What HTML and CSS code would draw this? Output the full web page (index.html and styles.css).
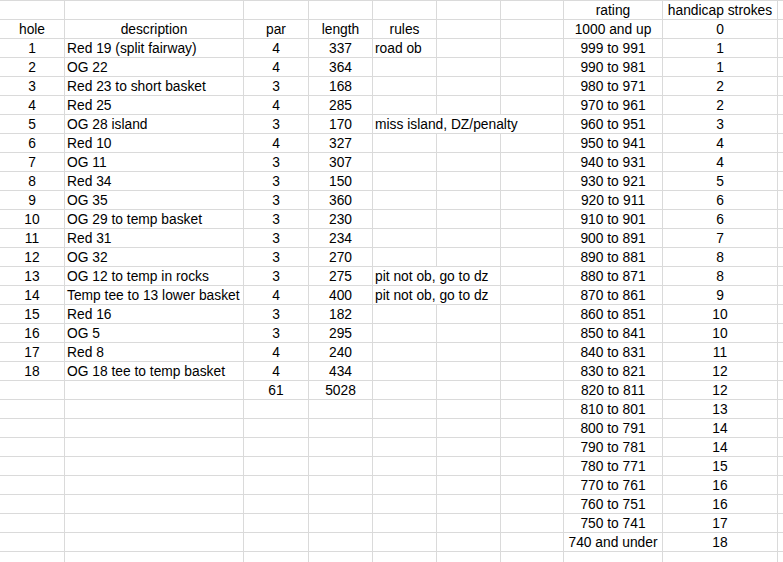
FILE: index.html
```html
<!DOCTYPE html>
<html>
<head>
<meta charset="utf-8">
<link rel="stylesheet" href="styles.css">
</head>
<body>
<div class="sheet">
  <div class="row"><div class="c"></div><div class="c"></div><div class="c"></div><div class="c"></div><div class="c"></div><div class="c"></div><div class="c"></div><div class="c ctr">rating</div><div class="c ctr">handicap strokes</div><div class="c"></div></div>
  <div class="row"><div class="c ctr">hole</div><div class="c ctr">description</div><div class="c ctr">par</div><div class="c ctr">length</div><div class="c ctr">rules</div><div class="c"></div><div class="c"></div><div class="c ctr">1000 and up</div><div class="c ctr">0</div><div class="c"></div></div>
  <div class="row"><div class="c ctr">1</div><div class="c">Red 19 (split fairway)</div><div class="c ctr">4</div><div class="c ctr">337</div><div class="c">road ob</div><div class="c"></div><div class="c"></div><div class="c ctr">999 to 991</div><div class="c ctr">1</div><div class="c"></div></div>
  <div class="row"><div class="c ctr">2</div><div class="c">OG 22</div><div class="c ctr">4</div><div class="c ctr">364</div><div class="c"></div><div class="c"></div><div class="c"></div><div class="c ctr">990 to 981</div><div class="c ctr">1</div><div class="c"></div></div>
  <div class="row"><div class="c ctr">3</div><div class="c">Red 23 to short basket</div><div class="c ctr">3</div><div class="c ctr">168</div><div class="c"></div><div class="c"></div><div class="c"></div><div class="c ctr">980 to 971</div><div class="c ctr">2</div><div class="c"></div></div>
  <div class="row"><div class="c ctr">4</div><div class="c">Red 25</div><div class="c ctr">4</div><div class="c ctr">285</div><div class="c"></div><div class="c"></div><div class="c"></div><div class="c ctr">970 to 961</div><div class="c ctr">2</div><div class="c"></div></div>
  <div class="row"><div class="c ctr">5</div><div class="c">OG 28 island</div><div class="c ctr">3</div><div class="c ctr">170</div><div class="c s3">miss island, DZ/penalty</div><div class="c ctr">960 to 951</div><div class="c ctr">3</div><div class="c"></div></div>
  <div class="row"><div class="c ctr">6</div><div class="c">Red 10</div><div class="c ctr">4</div><div class="c ctr">327</div><div class="c"></div><div class="c"></div><div class="c"></div><div class="c ctr">950 to 941</div><div class="c ctr">4</div><div class="c"></div></div>
  <div class="row"><div class="c ctr">7</div><div class="c">OG 11</div><div class="c ctr">3</div><div class="c ctr">307</div><div class="c"></div><div class="c"></div><div class="c"></div><div class="c ctr">940 to 931</div><div class="c ctr">4</div><div class="c"></div></div>
  <div class="row"><div class="c ctr">8</div><div class="c">Red 34</div><div class="c ctr">3</div><div class="c ctr">150</div><div class="c"></div><div class="c"></div><div class="c"></div><div class="c ctr">930 to 921</div><div class="c ctr">5</div><div class="c"></div></div>
  <div class="row"><div class="c ctr">9</div><div class="c">OG 35</div><div class="c ctr">3</div><div class="c ctr">360</div><div class="c"></div><div class="c"></div><div class="c"></div><div class="c ctr">920 to 911</div><div class="c ctr">6</div><div class="c"></div></div>
  <div class="row"><div class="c ctr">10</div><div class="c">OG 29 to temp basket</div><div class="c ctr">3</div><div class="c ctr">230</div><div class="c"></div><div class="c"></div><div class="c"></div><div class="c ctr">910 to 901</div><div class="c ctr">6</div><div class="c"></div></div>
  <div class="row"><div class="c ctr">11</div><div class="c">Red 31</div><div class="c ctr">3</div><div class="c ctr">234</div><div class="c"></div><div class="c"></div><div class="c"></div><div class="c ctr">900 to 891</div><div class="c ctr">7</div><div class="c"></div></div>
  <div class="row"><div class="c ctr">12</div><div class="c">OG 32</div><div class="c ctr">3</div><div class="c ctr">270</div><div class="c"></div><div class="c"></div><div class="c"></div><div class="c ctr">890 to 881</div><div class="c ctr">8</div><div class="c"></div></div>
  <div class="row"><div class="c ctr">13</div><div class="c">OG 12 to temp in rocks</div><div class="c ctr">3</div><div class="c ctr">275</div><div class="c s2">pit not ob, go to dz</div><div class="c"></div><div class="c ctr">880 to 871</div><div class="c ctr">8</div><div class="c"></div></div>
  <div class="row"><div class="c ctr">14</div><div class="c">Temp tee to 13 lower basket</div><div class="c ctr">4</div><div class="c ctr">400</div><div class="c s2">pit not ob, go to dz</div><div class="c"></div><div class="c ctr">870 to 861</div><div class="c ctr">9</div><div class="c"></div></div>
  <div class="row"><div class="c ctr">15</div><div class="c">Red 16</div><div class="c ctr">3</div><div class="c ctr">182</div><div class="c"></div><div class="c"></div><div class="c"></div><div class="c ctr">860 to 851</div><div class="c ctr">10</div><div class="c"></div></div>
  <div class="row"><div class="c ctr">16</div><div class="c">OG 5</div><div class="c ctr">3</div><div class="c ctr">295</div><div class="c"></div><div class="c"></div><div class="c"></div><div class="c ctr">850 to 841</div><div class="c ctr">10</div><div class="c"></div></div>
  <div class="row"><div class="c ctr">17</div><div class="c">Red 8</div><div class="c ctr">4</div><div class="c ctr">240</div><div class="c"></div><div class="c"></div><div class="c"></div><div class="c ctr">840 to 831</div><div class="c ctr">11</div><div class="c"></div></div>
  <div class="row"><div class="c ctr">18</div><div class="c">OG 18 tee to temp basket</div><div class="c ctr">4</div><div class="c ctr">434</div><div class="c"></div><div class="c"></div><div class="c"></div><div class="c ctr">830 to 821</div><div class="c ctr">12</div><div class="c"></div></div>
  <div class="row"><div class="c"></div><div class="c"></div><div class="c ctr">61</div><div class="c ctr">5028</div><div class="c"></div><div class="c"></div><div class="c"></div><div class="c ctr">820 to 811</div><div class="c ctr">12</div><div class="c"></div></div>
  <div class="row"><div class="c"></div><div class="c"></div><div class="c"></div><div class="c"></div><div class="c"></div><div class="c"></div><div class="c"></div><div class="c ctr">810 to 801</div><div class="c ctr">13</div><div class="c"></div></div>
  <div class="row"><div class="c"></div><div class="c"></div><div class="c"></div><div class="c"></div><div class="c"></div><div class="c"></div><div class="c"></div><div class="c ctr">800 to 791</div><div class="c ctr">14</div><div class="c"></div></div>
  <div class="row"><div class="c"></div><div class="c"></div><div class="c"></div><div class="c"></div><div class="c"></div><div class="c"></div><div class="c"></div><div class="c ctr">790 to 781</div><div class="c ctr">14</div><div class="c"></div></div>
  <div class="row"><div class="c"></div><div class="c"></div><div class="c"></div><div class="c"></div><div class="c"></div><div class="c"></div><div class="c"></div><div class="c ctr">780 to 771</div><div class="c ctr">15</div><div class="c"></div></div>
  <div class="row"><div class="c"></div><div class="c"></div><div class="c"></div><div class="c"></div><div class="c"></div><div class="c"></div><div class="c"></div><div class="c ctr">770 to 761</div><div class="c ctr">16</div><div class="c"></div></div>
  <div class="row"><div class="c"></div><div class="c"></div><div class="c"></div><div class="c"></div><div class="c"></div><div class="c"></div><div class="c"></div><div class="c ctr">760 to 751</div><div class="c ctr">16</div><div class="c"></div></div>
  <div class="row"><div class="c"></div><div class="c"></div><div class="c"></div><div class="c"></div><div class="c"></div><div class="c"></div><div class="c"></div><div class="c ctr">750 to 741</div><div class="c ctr">17</div><div class="c"></div></div>
  <div class="row"><div class="c"></div><div class="c"></div><div class="c"></div><div class="c"></div><div class="c"></div><div class="c"></div><div class="c"></div><div class="c ctr">740 and under</div><div class="c ctr">18</div><div class="c"></div></div>
  <div class="row"><div class="c"></div><div class="c"></div><div class="c"></div><div class="c"></div><div class="c"></div><div class="c"></div><div class="c"></div><div class="c"></div><div class="c"></div><div class="c"></div></div>
</div>
</body>
</html>
```

FILE: styles.css
```css
html, body {
  margin: 0;
  padding: 0;
  background: #ffffff;
  overflow: hidden;
}

body {
  font-family: "Liberation Sans", Arial, sans-serif;
  font-size: 13.8px;
  color: #000000;
}

.sheet {
  width: 100%;
  border-top: 1px solid #dadada;
}

.row {
  display: grid;
  grid-template-columns: 65px 179px 65px 64px 64px 64px 63px 99px 115px minmax(0, 1fr);
  height: 19px;
}

.c {
  border-right: 1px solid #dadada;
  border-bottom: 1px solid #dadada;
  line-height: 16px;
  padding: 2px 2px 0;
  white-space: nowrap;
  overflow: visible;
}

.row > .c:last-child {
  border-right: none;
  padding: 0;
}

.ctr {
  text-align: center;
}

.s2 {
  grid-column: span 2;
}

.s3 {
  grid-column: span 3;
}
```
